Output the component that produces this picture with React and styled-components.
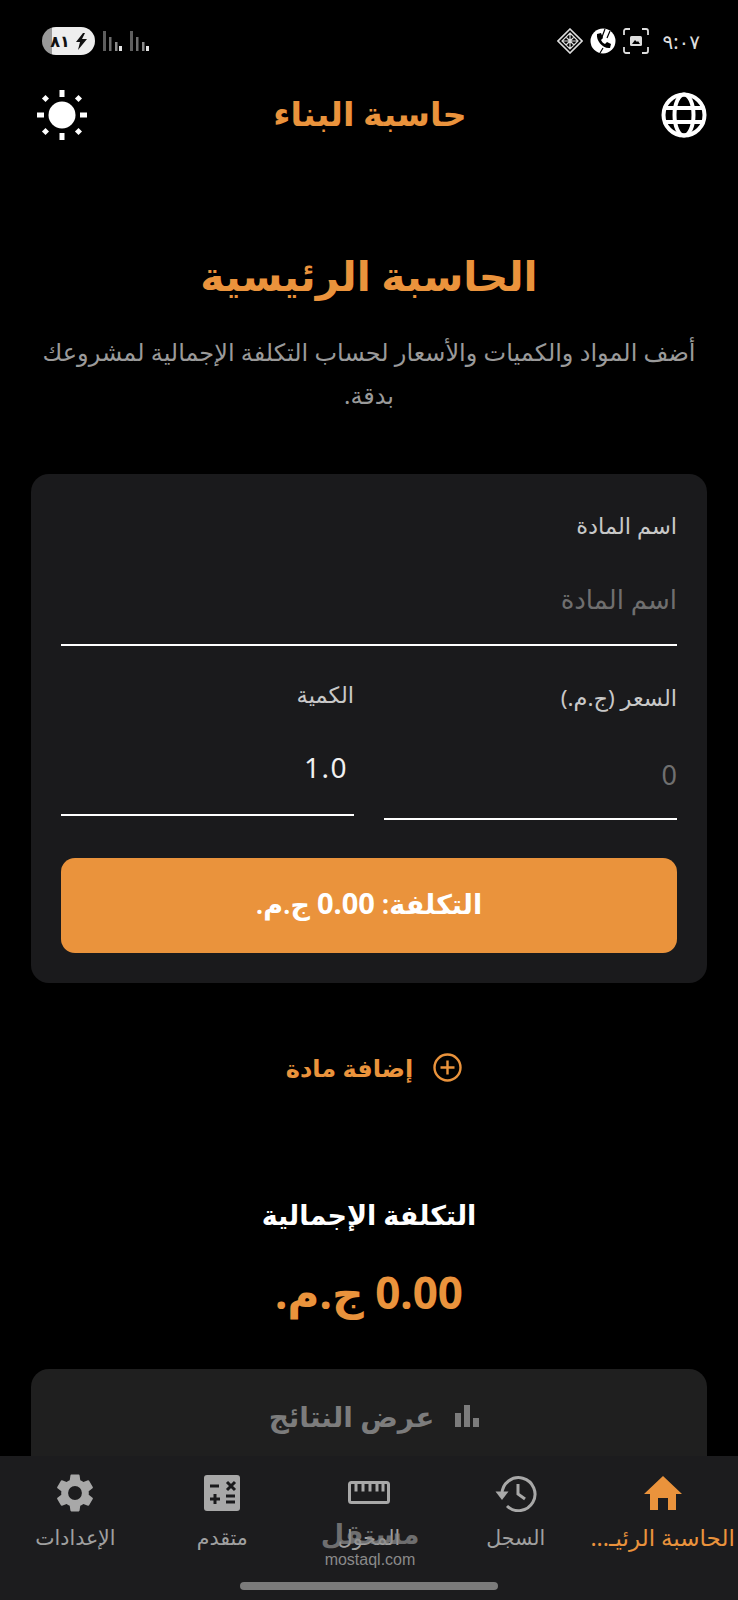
import React from "react"
import styled, { createGlobalStyle } from "styled-components"

const ORANGE = "#ea933c"
const FONT = `"Noto Sans", "DejaVu Sans", sans-serif`

const Global = createGlobalStyle`
  html, body { margin: 0; padding: 0; background: #000; }
  * { box-sizing: border-box; }
`

const Sun = () => (
  <svg width="50" height="50" viewBox="0 0 50 50" fill="#fff">
    <circle cx="25" cy="25" r="13.5" />
    <rect x="22.5" y="0" width="5" height="7" />
    <rect x="22.5" y="43" width="5" height="7" />
    <rect x="0" y="22.5" width="7" height="5" />
    <rect x="43" y="22.5" width="7" height="5" />
    <rect x="6" y="6" width="5" height="5" transform="rotate(45 8.5 8.5)" />
    <rect x="39" y="6" width="5" height="5" transform="rotate(45 41.5 8.5)" />
    <rect x="6" y="39" width="5" height="5" transform="rotate(45 8.5 41.5)" />
    <rect x="39" y="39" width="5" height="5" transform="rotate(45 41.5 41.5)" />
  </svg>
)

const Globe = () => (
  <svg width="46" height="46" viewBox="0 0 46 46" fill="none" stroke="#fff" strokeWidth="4">
    <circle cx="23" cy="23" r="20.5" />
    <ellipse cx="23" cy="23" rx="9.5" ry="20.5" />
    <path d="M4 16h38M4 30h38" />
  </svg>
)

const Home = () => (
  <svg width="38" height="34" viewBox="0 0 38 34" fill={ORANGE}>
    <path d="M19 0 38 18h-6v16h-8V22H14v12H6V18H0z" />
  </svg>
)

const HistoryIcon = () => (
  <svg width="42" height="38" viewBox="0 0 42 38" fill="none" stroke="#a8a8a8" strokeWidth="3">
    <path d="M7 20a16.5 16.5 0 1 1 5 12" />
    <path d="M0.5 17.5h13L7 26z" fill="#a8a8a8" stroke="none" />
    <path d="M23 10v10l7 5" />
  </svg>
)

const RulerIcon = () => (
  <svg width="42" height="24" viewBox="0 0 42 24" fill="none" stroke="#a8a8a8" strokeWidth="3">
    <rect x="1.5" y="1.5" width="39" height="20" rx="2" />
    <path d="M8 1.5v9M15 1.5v9M22 1.5v9M29 1.5v9M35 1.5v9" />
  </svg>
)

const CalcIcon = () => (
  <svg width="36" height="36" viewBox="0 0 36 36">
    <rect width="36" height="36" rx="3" fill="#a8a8a8" />
    <path d="M6 11h9M6 24h10M11 19v10M22 21h9M22 27h9M23 7l8 8M31 7l-8 8" stroke="#1a1a1c" strokeWidth="3" fill="none" />
  </svg>
)

const Gear = () => (
  <svg width="46" height="46" viewBox="0 0 24 24" fill="#a8a8a8">
    <path d="M19.14 12.94c.04-.3.06-.61.06-.94s-.02-.64-.07-.94l2.03-1.58a.49.49 0 0 0 .12-.61l-1.92-3.32a.49.49 0 0 0-.59-.22l-2.39.96a7 7 0 0 0-1.62-.94l-.36-2.54a.48.48 0 0 0-.48-.41h-3.84a.48.48 0 0 0-.47.41l-.36 2.54c-.59.24-1.13.57-1.62.94l-2.39-.96a.48.48 0 0 0-.59.22L2.74 8.87a.48.48 0 0 0 .12.61l2.03 1.58c-.05.3-.09.63-.09.94s.02.64.07.94l-2.03 1.58a.49.49 0 0 0-.12.61l1.92 3.32c.12.22.37.29.59.22l2.39-.96c.5.38 1.03.7 1.62.94l.36 2.54c.05.24.24.41.48.41h3.84c.24 0 .44-.17.47-.41l.36-2.54c.59-.24 1.13-.56 1.62-.94l2.39.96c.22.08.47 0 .59-.22l1.92-3.32a.48.48 0 0 0-.12-.61l-2.01-1.58zM12 15.6A3.6 3.6 0 1 1 12 8.4a3.6 3.6 0 0 1 0 7.2z" />
  </svg>
)

const Signal = () => (
  <svg width="19" height="20" viewBox="0 0 19 20">
    <rect x="0" y="0" width="3" height="20" fill="#5e5e5e" />
    <rect x="6" y="6" width="2.5" height="14" fill="#6e6e6e" />
    <rect x="12" y="11" width="2.5" height="9" fill="#8a8a8a" />
    <rect x="16" y="15" width="3" height="5" fill="#e4e4e4" />
  </svg>
)

const Sim = () => (
  <svg width="26" height="26" viewBox="0 0 26 26" fill="none" stroke="#ddd" strokeWidth="1.6">
    <path d="M13 1 25 13 13 25 1 13z" />
    <path d="M13 5 21 13 13 21 5 13zM9 9l8 8M17 9l-8 8M13 5v16M5 13h16" strokeWidth="1.2" />
  </svg>
)

const Phone = () => (
  <svg width="26" height="26" viewBox="0 0 26 26">
    <circle cx="13" cy="13" r="12.5" fill="#fff" />
    <path d="M7 6l4-1 2 5-2 2c1 2 2 3 4 4l2-2 4 2-1 4c-7 1-14-7-13-14z" fill="#000" />
    <path d="M15 1l-3 8M20 3l-3 7M10 25l3-5" stroke="#000" strokeWidth="1.2" />
  </svg>
)

const Shot = () => (
  <svg width="26" height="26" viewBox="0 0 26 26" fill="none" stroke="#ddd" strokeWidth="1.8">
    <path d="M1 7V3a2 2 0 0 1 2-2h4M19 1h4a2 2 0 0 1 2 2v4M25 19v4a2 2 0 0 1-2 2h-4M7 25H3a2 2 0 0 1-2-2v-4" />
    <rect x="7" y="8" width="12" height="10" rx="1.5" fill="#ddd" stroke="none" />
    <path d="M9 16l3-4 2 2 1-1 2 3z" fill="#000" stroke="none" />
  </svg>
)

const Bolt = () => (
  <svg width="11" height="17" viewBox="0 0 11 17" fill="#111">
    <path d="M7 0 0 9h4l-2 8 9-11H6l3-6z" />
  </svg>
)

const Bars = () => (
  <svg width="24" height="22" viewBox="0 0 24 22" fill="#7c7c7c">
    <rect x="0" y="8" width="6" height="14" />
    <rect x="9" y="0" width="6" height="22" />
    <rect x="18" y="13" width="6" height="9" />
  </svg>
)

const PlusCircle = () => (
  <svg width="29" height="29" viewBox="0 0 29 29" fill="none" stroke={ORANGE} strokeWidth="2.4">
    <circle cx="14.5" cy="14.5" r="13" />
    <path d="M14.5 7.5v14M7.5 14.5h14" />
  </svg>
)

const Page = styled.div`
  width: 738px;
  height: 1600px;
  background: #000;
  font-family: ${FONT};
  display: flex;
  flex-direction: column;
  overflow: hidden;
`

const StatusBar = styled.div`
  height: 70px;
  padding: 12px 38px 0 42px;
  display: flex;
  align-items: center;
  justify-content: space-between;
  flex-shrink: 0;
`

const StatusGroup = styled.div`
  display: flex;
  align-items: center;
  gap: ${(p) => p.$gap}px;
`

const Battery = styled.div`
  width: 53px;
  height: 28px;
  border-radius: 14px;
  background: linear-gradient(90deg, #999 0 10px, #eee 10px);
  color: #111;
  font-size: 16px;
  font-weight: 600;
  display: flex;
  align-items: center;
  justify-content: center;
  gap: 6px;
  direction: rtl;
`

const Clock = styled.span`
  margin-left: 6px;
  color: #ddd;
  font-size: 20px;
  letter-spacing: 1px;
`

const AppBar = styled.header`
  height: 88px;
  padding: 2px 31px 0 37px;
  display: flex;
  align-items: center;
  justify-content: space-between;
  flex-shrink: 0;
`

const AppTitle = styled.h1`
  margin: 0 8px 4px 0;
  font-size: 33.5px;
  font-weight: 700;
  color: ${ORANGE};
`

const Main = styled.main`
  flex: 1;
  min-height: 0;
  overflow: hidden;
  padding: 0 31px;
  display: flex;
  flex-direction: column;
  direction: rtl;
`

const Heading = styled.h2`
  margin: 75px 0 0;
  height: 84px;
  font-size: 41px;
  font-weight: 700;
  line-height: 84px;
  text-align: center;
  color: ${ORANGE};
`

const Intro = styled.p`
  margin: 13px 4px 0;
  font-size: 24px;
  line-height: 43px;
  text-align: center;
  color: #9a9a9a;
`

const Card = styled.section`
  margin-top: 58px;
  height: 509px;
  flex-shrink: 0;
  padding: 30px 30px 0;
  background: #1a1a1c;
  border-radius: 18px;
  display: flex;
  flex-direction: column;
`

const Label = styled.label`
  display: block;
  font-size: 22.5px;
  line-height: ${(p) => p.$line || 44}px;
  color: #c8c8c8;
`

const FieldText = styled.div`
  height: ${(p) => p.$h}px;
  padding-top: ${(p) => p.$top}px;
  padding-inline-start: ${(p) => p.$inset || 0}px;
  font-size: ${(p) => p.$size}px;
  letter-spacing: ${(p) => (p.$filled ? 1.5 : 0)}px;
  display: flex;
  align-items: center;
  color: ${(p) => (p.$filled ? "#f0f0f0" : "#6f6f6f")};
  border-bottom: 2px solid #fff;
`

const Row = styled.div`
  margin-top: 30px;
  display: grid;
  grid-template-columns: 1fr 1fr;
  gap: 30px;
`

const CostButton = styled.button`
  margin-top: 38px;
  height: 95px;
  flex-shrink: 0;
  border: 0;
  border-radius: 14px;
  padding: 0 0 6px;
  background: ${ORANGE};
  color: #fff;
  font-family: ${FONT};
  font-size: 27px;
  font-weight: 600;
  direction: rtl;
`

const CostAmount = styled.strong`
  font-size: 29px;
  font-weight: 700;
`

const AddRow = styled.div`
  margin-top: 68px;
  height: 40px;
  padding-left: 10px;
  display: flex;
  align-items: center;
  justify-content: center;
  gap: 20px;
  color: ${ORANGE};
  font-size: 24px;
  font-weight: 600;
`

const TotalLabel = styled.div`
  margin-top: 111px;
  text-align: center;
  color: #fff;
  font-size: 27px;
  font-weight: 700;
  line-height: 40px;
`

const TotalValue = styled.div`
  margin-top: 25px;
  text-align: center;
  color: ${ORANGE};
  font-size: 44px;
  font-weight: 700;
  line-height: 64px;
`

const ResultsButton = styled.div`
  margin-top: 45px;
  height: 94px;
  flex-shrink: 0;
  padding-left: 10px;
  background: #1f1f1f;
  border-radius: 18px 18px 0 0;
  display: flex;
  align-items: center;
  justify-content: center;
  gap: 21px;
  color: #7c7c7c;
  font-size: 28px;
  font-weight: 600;
`

const Nav = styled.nav`
  height: 144px;
  flex-shrink: 0;
  background: #1c1c1e;
  position: relative;
  direction: rtl;
  display: grid;
  grid-template-columns: repeat(5, 1fr);
  padding: 0 2px;
`

const NavItem = styled.div`
  display: flex;
  flex-direction: column;
  align-items: center;
  color: ${(p) => (p.$active ? ORANGE : "#a0a0a0")};
  font-size: ${(p) => (p.$active ? 23 : 20.5)}px;
  white-space: nowrap;
`

const NavIcon = styled.div`
  height: 60px;
  margin-top: 7px;
  display: flex;
  align-items: center;
  justify-content: center;
`

const NavText = styled.span`
  margin-top: -2px;
  line-height: 32px;
`

const Watermark = styled.div`
  position: absolute;
  left: 320px;
  top: 64px;
  width: 100px;
  direction: ltr;
  text-align: center;
  color: #8a8a8a;
`

const MarkLogo = styled.div`
  font-size: 27px;
  font-weight: 700;
  line-height: 28px;
  opacity: 0.75;
`

const MarkUrl = styled.div`
  margin-top: 3px;
  font-family: "Liberation Sans", sans-serif;
  font-size: 16px;
  line-height: 18px;
`

const HomeBar = styled.div`
  position: absolute;
  left: 240px;
  top: 126px;
  width: 258px;
  height: 8px;
  border-radius: 4px;
  background: #7b7b7b;
`

export default function App() {
  return (
    <Page>
      <Global />
      <StatusBar>
        <StatusGroup $gap={8}>
          <Battery>
            <Bolt />
            <span>٨١</span>
          </Battery>
          <Signal />
          <Signal />
        </StatusGroup>
        <StatusGroup $gap={7}>
          <Sim />
          <Phone />
          <Shot />
          <Clock>٩:٠٧</Clock>
        </StatusGroup>
      </StatusBar>
      <AppBar>
        <Sun />
        <AppTitle>حاسبة البناء</AppTitle>
        <Globe />
      </AppBar>
      <Main>
        <Heading>الحاسبة الرئيسية</Heading>
        <Intro>أضف المواد والكميات والأسعار لحساب التكلفة الإجمالية لمشروعك بدقة.</Intro>
        <Card>
          <Label>اسم المادة</Label>
          <FieldText $h={98} $top={6} $size={26}>اسم المادة</FieldText>
          <Row>
            <div>
              <Label>السعر (ج.م.)</Label>
              <FieldText $h={100} $top={10} $size={27}>0</FieldText>
            </div>
            <div>
              <Label $line={38}>الكمية</Label>
              <FieldText $h={102} $top={6} $size={28} $inset={6} $filled>1.0</FieldText>
            </div>
          </Row>
          <CostButton>التكلفة: <CostAmount>0.00</CostAmount> ج.م.</CostButton>
        </Card>
        <AddRow>
          <PlusCircle />
          <span>إضافة مادة</span>
        </AddRow>
        <TotalLabel>التكلفة الإجمالية</TotalLabel>
        <TotalValue>0.00 ج.م.</TotalValue>
        <ResultsButton>
          <Bars />
          <span>عرض النتائج</span>
        </ResultsButton>
      </Main>
      <Nav>
        <NavItem $active>
          <NavIcon><Home /></NavIcon>
          <NavText>الحاسبة الرئيـ...</NavText>
        </NavItem>
        <NavItem>
          <NavIcon><HistoryIcon /></NavIcon>
          <NavText>السجل</NavText>
        </NavItem>
        <NavItem>
          <NavIcon><RulerIcon /></NavIcon>
          <NavText>المحول</NavText>
        </NavItem>
        <NavItem>
          <NavIcon><CalcIcon /></NavIcon>
          <NavText>متقدم</NavText>
        </NavItem>
        <NavItem>
          <NavIcon><Gear /></NavIcon>
          <NavText>الإعدادات</NavText>
        </NavItem>
        <Watermark>
          <MarkLogo>مستقل</MarkLogo>
          <MarkUrl>mostaql.com</MarkUrl>
        </Watermark>
        <HomeBar />
      </Nav>
    </Page>
  )
}
